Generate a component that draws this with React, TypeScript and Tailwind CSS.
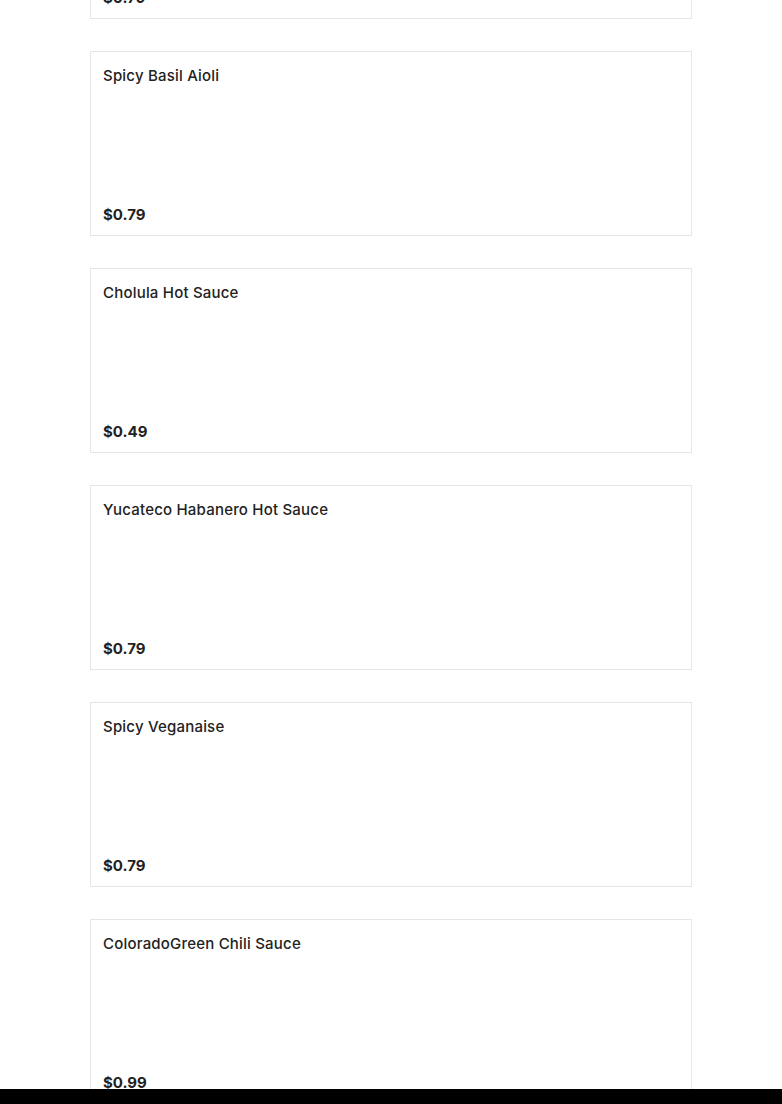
const items = [
  { name: 'Previous Item', price: '$0.79' },
  { name: 'Spicy Basil Aioli', price: '$0.79' },
  { name: 'Cholula Hot Sauce', price: '$0.49' },
  { name: 'Yucateco Habanero Hot Sauce', price: '$0.79' },
  { name: 'Spicy Veganaise', price: '$0.79' },
  { name: 'ColoradoGreen Chili Sauce', price: '$0.99' },
]

function ItemCard({ name, price }: { name: string; price: string }) {
  return (
    <div className="flex h-[185px] flex-col justify-between border border-[#e6e6e6] bg-white px-3 pt-[14px] pb-[10px]">
      <h3 className="text-[15px] font-medium leading-5 tracking-[0.2px] text-[#222]">{name}</h3>
      <p className="text-[15px] font-bold leading-5 text-[#222]">{price}</p>
    </div>
  )
}

export default function App() {
  return (
    <div className="h-[1104px] overflow-hidden bg-white font-['Inter',sans-serif]">
      <div className="mx-[90px] mt-[-166px] flex flex-col gap-8">
        {items.map((item, i) => (
          <ItemCard key={i} name={item.name} price={item.price} />
        ))}
      </div>
      <div className="fixed inset-x-0 bottom-0 h-[15px] bg-black" />
    </div>
  )
}
